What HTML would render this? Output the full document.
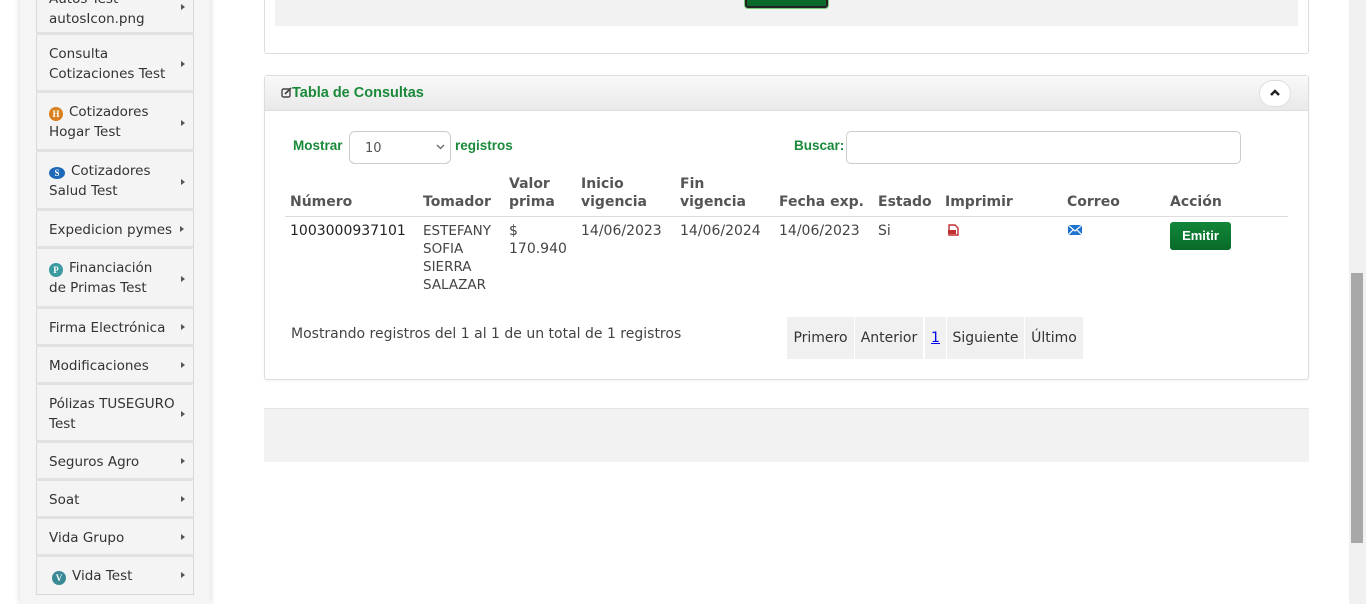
<!DOCTYPE html>
<html><head><meta charset="utf-8"><style>
*{box-sizing:border-box;margin:0;padding:0}
html{width:1366px;height:604px;overflow:hidden}
body{width:1366px;height:604px;overflow:hidden;background:#fff;font-family:"DejaVu Sans","Liberation Sans",sans-serif;font-size:13.5px;color:#333;position:relative}
.a{position:absolute;white-space:nowrap}
.side{position:absolute;left:20px;top:-5px;width:190px;height:609px;background:#f5f5f5;box-shadow:0 0 6px rgba(0,0,0,.18)}
.it{position:absolute;left:36px;width:158px;background:#f4f4f4;border:1px solid #d8d8d8;border-top:none;border-bottom:3px solid #e2e2e2;font-size:13.5px;line-height:20px;color:#333;padding-left:12px}
.it .t{position:absolute;left:12px}
.it .ar{position:absolute;right:8px;width:0;height:0;border-left:4px solid #555;border-top:3.5px solid transparent;border-bottom:3.5px solid transparent}
.ic{display:inline-block;width:14px;height:14px;border-radius:50%;color:#fff;font-size:9px;line-height:14px;text-align:center;font-weight:bold;margin-right:6px;vertical-align:-1px;font-family:"Liberation Serif",serif}
.th{font-weight:bold;color:#555;line-height:18px;font-size:14px}
.g{color:#1a8a3a;font-weight:bold}
.pg{position:absolute;top:317px;height:42px;background:#f0f0f0;line-height:42px;text-align:center;color:#333;font-size:14px}
</style></head><body>
<div class="side"></div>
<div class="it" style="top:-8px;height:43px"><span class="t" style="top:-3px">Autos Test<br>autosIcon.png</span><span class="ar" style="top:12px"></span></div>
<div class="it" style="top:35px;height:58px"><span class="t" style="top:9px">Consulta<br>Cotizaciones Test</span><span class="ar" style="top:26px"></span></div>
<div class="it" style="top:93px;height:59px"><span class="t" style="top:9px"><span class="ic" style="background:#d8801e">H</span>Cotizadores<br>Hogar Test</span><span class="ar" style="top:27px"></span></div>
<div class="it" style="top:152px;height:59px"><span class="t" style="top:9px"><span class="ic" style="background:#1e6ab8;width:16px;height:12px;line-height:12px">S</span>Cotizadores<br>Salud Test</span><span class="ar" style="top:27px"></span></div>
<div class="it" style="top:211px;height:38px"><span class="t" style="top:9px">Expedicion pymes</span><span class="ar" style="top:15px;right:9px"></span></div>
<div class="it" style="top:249px;height:60px"><span class="t" style="top:9px"><span class="ic" style="background:#3a9aa0">P</span>Financiación<br>de Primas Test</span><span class="ar" style="top:27px"></span></div>
<div class="it" style="top:309px;height:38px"><span class="t" style="top:9px">Firma Electrónica</span><span class="ar" style="top:15px"></span></div>
<div class="it" style="top:347px;height:38px"><span class="t" style="top:9px">Modificaciones</span><span class="ar" style="top:15px"></span></div>
<div class="it" style="top:385px;height:58px"><span class="t" style="top:9px">Pólizas TUSEGURO<br>Test</span><span class="ar" style="top:26px"></span></div>
<div class="it" style="top:443px;height:38px"><span class="t" style="top:9px">Seguros Agro</span><span class="ar" style="top:15px"></span></div>
<div class="it" style="top:481px;height:38px"><span class="t" style="top:9px">Soat</span><span class="ar" style="top:15px"></span></div>
<div class="it" style="top:519px;height:38px"><span class="t" style="top:9px">Vida Grupo</span><span class="ar" style="top:15px"></span></div>
<div class="it" style="top:557px;height:38px;border-bottom:1px solid #d8d8d8"><span class="t" style="top:9px;left:15px"><span class="ic" style="background:#3a8a96">V</span>Vida Test</span><span class="ar" style="top:15px"></span></div>

<div class="a" style="left:264px;top:-5px;width:1045px;height:59px;border:1px solid #ddd;border-radius:3px;background:#fff"></div>
<div class="a" style="left:275px;top:0;width:1023px;height:26px;background:#f2f2f2"></div>
<div class="a" style="left:745px;top:-5px;width:83px;height:13px;background:#0a6a2c;border:2px solid #222;border-radius:3px;box-shadow:0 0 0 1px #7c7"></div>

<div class="a" style="left:264px;top:75px;width:1045px;height:305px;border:1px solid #ddd;border-radius:3px;background:#fff;box-shadow:0 1px 2px rgba(0,0,0,.05)"></div>
<div class="a" style="left:265px;top:76px;width:1043px;height:35px;background:linear-gradient(#f9f9f9,#e9e9e9);border-bottom:1px solid #ddd"></div>
<div class="a g" style="left:281px;top:85px;font-size:14.5px;font-family:'Liberation Sans',sans-serif">
<svg width="11" height="11" viewBox="0 0 11 11" style="vertical-align:-1px"><rect x="1" y="2" width="8" height="8" rx="1.5" fill="none" stroke="#444" stroke-width="1.4"/><path d="M4 7 L10 1" stroke="#444" stroke-width="1.8"/></svg>Tabla de Consultas</div>
<div class="a" style="left:1259px;top:80px;width:32px;height:27px;border-radius:14px;background:#fff;border:1px solid #ddd"></div>
<svg class="a" style="left:1269px;top:88px" width="12" height="10" viewBox="0 0 12 10"><path d="M2 7 L6 3 L10 7" fill="none" stroke="#222" stroke-width="2.5"/></svg>

<div class="a g" style="left:293px;top:138px;font-size:13.5px;font-family:'Liberation Sans',sans-serif;font-weight:bold">Mostrar</div>
<div class="a" style="left:349px;top:131px;width:102px;height:33px;border:1px solid #ccc;border-radius:6px;font-size:13px;color:#555;padding:9px 0 0 15px">10</div>
<svg class="a" style="left:436px;top:144px" width="9" height="6" viewBox="0 0 9 6"><path d="M1 1 L4.5 4.5 L8 1" fill="none" stroke="#666" stroke-width="1.3"/></svg>
<div class="a g" style="left:455px;top:138px;font-size:13.5px;font-family:'Liberation Sans',sans-serif">registros</div>
<div class="a g" style="left:794px;top:138px;font-size:13.5px;font-family:'Liberation Sans',sans-serif">Buscar:</div>
<div class="a" style="left:846px;top:131px;width:395px;height:33px;border:1px solid #ccc;border-radius:5px"></div>

<div class="a th" style="left:290px;top:193px">Número</div>
<div class="a th" style="left:423px;top:193px">Tomador</div>
<div class="a th" style="left:509px;top:175px">Valor<br>prima</div>
<div class="a th" style="left:581px;top:175px">Inicio<br>vigencia</div>
<div class="a th" style="left:680px;top:175px">Fin<br>vigencia</div>
<div class="a th" style="left:779px;top:193px">Fecha exp.</div>
<div class="a th" style="left:878px;top:193px">Estado</div>
<div class="a th" style="left:945px;top:193px">Imprimir</div>
<div class="a th" style="left:1067px;top:193px">Correo</div>
<div class="a th" style="left:1170px;top:193px">Acción</div>
<div class="a" style="left:285px;top:216px;width:1003px;height:1px;background:#ddd"></div>

<div class="a" style="left:290px;top:222px;line-height:18px;color:#222;font-size:14px">1003000937101</div>
<div class="a" style="left:423px;top:222px;line-height:18px;color:#444;font-size:13.5px">ESTEFANY<br>SOFIA<br>SIERRA<br>SALAZAR</div>
<div class="a" style="left:509px;top:222px;line-height:18px;color:#444;font-size:14px">$<br>170.940</div>
<div class="a" style="left:581px;top:222px;line-height:18px;color:#444;font-size:14px">14/06/2023</div>
<div class="a" style="left:680px;top:222px;line-height:18px;color:#444;font-size:14px">14/06/2024</div>
<div class="a" style="left:779px;top:222px;line-height:18px;color:#444;font-size:14px">14/06/2023</div>
<div class="a" style="left:878px;top:222px;line-height:18px;color:#444;font-size:14px">Si</div>
<svg class="a" style="left:947px;top:224px" width="12" height="12" viewBox="0 0 12 12"><path d="M2 1 H8 L11 4 V11 H2 Z" fill="#fff" stroke="#c03030" stroke-width="1.4"/><rect x="1" y="6" width="8" height="4" fill="#c03030"/></svg>
<svg class="a" style="left:1068px;top:225px" width="14" height="10" viewBox="0 0 14 10"><rect width="14" height="10" fill="#1f74d0"/><path d="M0 0 L7 6 L14 0 M0 10 L5 5 M14 10 L9 5" fill="none" stroke="#fff" stroke-width="1.2"/></svg>
<div class="a" style="left:1170px;top:222px;width:61px;height:28px;background:linear-gradient(#12873a,#086a28);border-radius:3px;color:#fff;font-weight:bold;font-size:13px;line-height:28px;text-align:center;font-family:'Liberation Sans',sans-serif">Emitir</div>

<div class="a" style="left:291px;top:326px;color:#444;font-size:14px">Mostrando registros del 1 al 1 de un total de 1 registros</div>
<div class="pg" style="left:787px;width:67px">Primero</div>
<div class="pg" style="left:855px;width:68px">Anterior</div>
<div class="pg" style="left:925px;width:21px;color:#00e;text-decoration:underline">1</div>
<div class="pg" style="left:947px;width:77px">Siguiente</div>
<div class="pg" style="left:1025px;width:58px">Último</div>

<div class="a" style="left:264px;top:408px;width:1045px;height:54px;background:#f2f2f2;border-top:1px solid #e4e4e4"></div>

<div class="a" style="left:1349px;top:0;width:17px;height:604px;background:#f1f1f1"></div>
<div class="a" style="left:1351px;top:273px;width:12px;height:270px;background:#a8a8a8"></div>
</body></html>
